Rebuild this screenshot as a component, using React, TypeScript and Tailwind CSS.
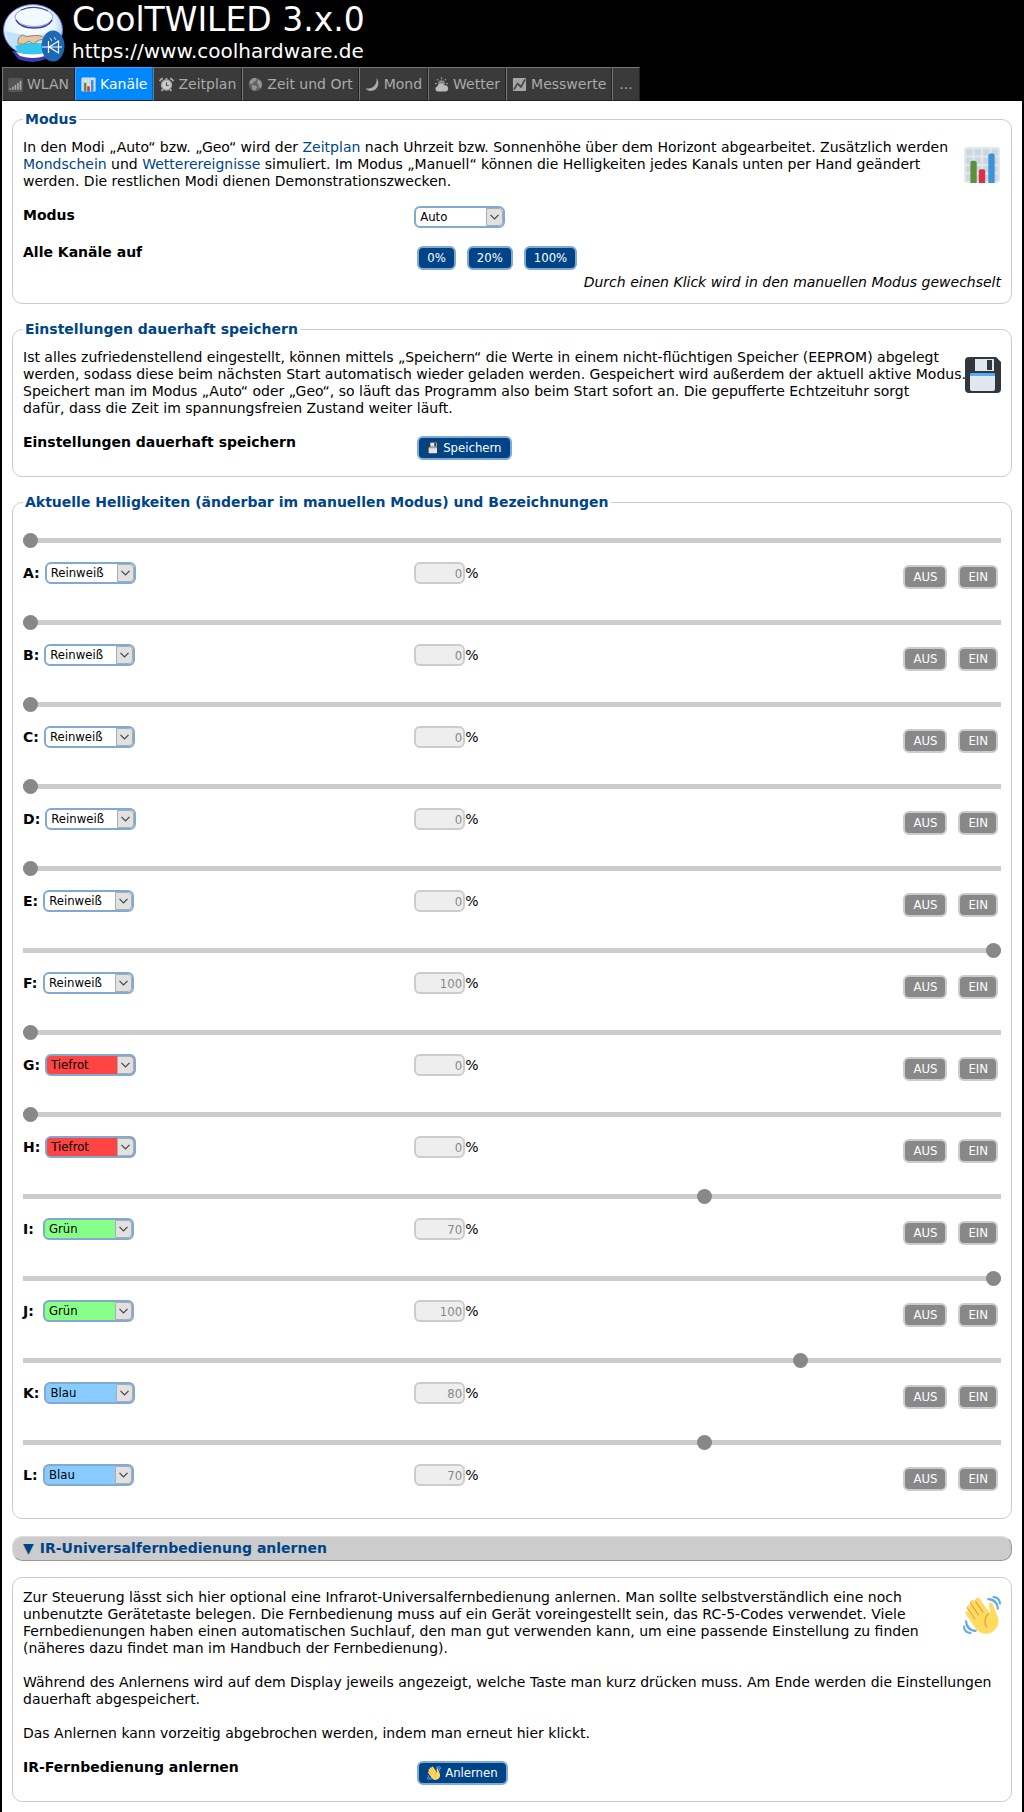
import React, { useState } from 'react';

interface IconProps {
  className?: string;
}

interface Channel {
  name: string;
  color: string;
  value: number;
}

const COLORS = ['Reinweiß', 'Tiefrot', 'Grün', 'Blau'];

const COLOR_CLASSES: Record<string, string> = {
  Reinweiß: 'bg-white',
  Tiefrot: 'bg-[#ff4444]',
  Grün: 'bg-[#88ff88]',
  Blau: 'bg-[#88ccff]',
};

const CHANNELS: Channel[] = [
  { name: 'A', color: 'Reinweiß', value: 0 },
  { name: 'B', color: 'Reinweiß', value: 0 },
  { name: 'C', color: 'Reinweiß', value: 0 },
  { name: 'D', color: 'Reinweiß', value: 0 },
  { name: 'E', color: 'Reinweiß', value: 0 },
  { name: 'F', color: 'Reinweiß', value: 100 },
  { name: 'G', color: 'Tiefrot', value: 0 },
  { name: 'H', color: 'Tiefrot', value: 0 },
  { name: 'I', color: 'Grün', value: 70 },
  { name: 'J', color: 'Grün', value: 100 },
  { name: 'K', color: 'Blau', value: 80 },
  { name: 'L', color: 'Blau', value: 70 },
];

const smallFont = "font-['DejaVu_Sans_Condensed','DejaVu_Sans',sans-serif]";

// Icons

const ChartIcon: React.FC<IconProps> = ({ className }) => (
  <svg viewBox="0 0 36 36" className={className} aria-hidden="true">
    <rect x="1" y="1" width="34" height="34" rx="3" fill="#e1e8ed" />
    <g fill="#ccd6dd">
      {[3, 11, 19, 27].map((y) =>
        [3, 11, 19, 27].map((x) => <rect key={`${x}-${y}`} x={x} y={y} width="6" height="6" rx="1" />)
      )}
    </g>
    <path fill="#5c913b" d="M13 35H7V16a2 2 0 0 1 2-2h2a2 2 0 0 1 2 2v19z" />
    <path fill="#dd2e44" d="M21 35h-6V24a2 2 0 0 1 2-2h2a2 2 0 0 1 2 2v11z" />
    <path fill="#3b94d9" d="M30 35h-6V9a2 2 0 0 1 2-2h2a2 2 0 0 1 2 2v26z" />
  </svg>
);

const FloppyIcon: React.FC<IconProps> = ({ className }) => (
  <svg viewBox="0 0 36 36" className={className} aria-hidden="true">
    <path fill="#31373d" d="M4 0h27l5 5v27a4 4 0 0 1-4 4H4a4 4 0 0 1-4-4V4a4 4 0 0 1 4-4z" />
    <path fill="#e1e8ed" d="M10 2h19v12H10z" />
    <path fill="#31373d" d="M22 3h5v10h-5z" />
    <rect x="5" y="16" width="25" height="18" rx="2" fill="#e1e8ed" />
    <path fill="#55acee" d="M5 19v-1a2 2 0 0 1 2-2h21a2 2 0 0 1 2 2v1z" />
  </svg>
);

const WaveIcon: React.FC<IconProps> = ({ className }) => (
  <svg viewBox="0 0 36 36" className={className} aria-hidden="true">
    <path fill="#ef9645" d="M4.861 9.147c.94-.657 2.357-.531 3.201.166l-.968-1.407c-.779-1.111-.5-2.313.612-3.093 1.112-.777 4.263 1.312 4.263 1.312-.786-1.122-.639-2.544.483-3.331 1.122-.784 2.67-.513 3.456.611l10.42 14.72L25 31l-11.083-4.042L4.25 12.625c-.793-1.129-.519-2.686.611-3.478z" />
    <path fill="#ffdc5d" d="M2.695 17.336s-1.132-1.65.519-2.781c1.649-1.131 2.78.518 2.78.518l5.251 7.658c.181-.302.379-.6.6-.894L4.557 11.21s-1.131-1.649.519-2.78c1.649-1.131 2.78.518 2.78.518l6.855 9.997c.255-.208.516-.417.785-.622L7.549 6.732s-1.131-1.649.519-2.78c1.649-1.131 2.78.518 2.78.518l7.947 11.589c.292-.179.581-.334.871-.498L12.238 4.729s-1.131-1.649.518-2.78c1.649-1.131 2.78.518 2.78.518l7.854 11.453 1.194 1.742c-4.948 3.394-5.419 9.779-2.592 13.902.565.825 1.39.26 1.39.26-3.393-4.949-2.357-10.51 2.592-13.903L24.515 8.62s-.545-1.924 1.378-2.47c1.924-.545 2.47 1.379 2.47 1.379l1.685 5.004c.668 1.984 1.379 3.961 2.32 5.831 2.657 5.28 1.07 11.842-3.94 15.279-5.465 3.747-12.936 2.354-16.684-3.11L2.695 17.336z" />
    <g fill="#5dadec">
      <path d="M12 32.042C8 32.042 3.958 28 3.958 24c0-.553-.405-1-.958-1s-1.042.447-1.042 1C1.958 30 6 34.042 12 34.042c.553 0 1-.489 1-1.042s-.447-.958-1-.958z" />
      <path d="M7 34c-3 0-5-2-5-5 0-.553-.447-1-1-1s-1 .447-1 1c0 4 3 7 7 7 .553 0 1-.447 1-1s-.447-1-1-1zM24 2c-.552 0-1 .448-1 1s.448 1 1 1c4 0 8 3.589 8 8 0 .552.448 1 1 1s1-.448 1-1c0-5.514-4-10-10-10z" />
      <path d="M29 .042c-.552 0-1 .406-1 .958s.448 1.042 1 1.042c3 0 4.958 2.225 4.958 4.958 0 .552.489 1 1.042 1s.958-.448.958-1C35.958 3.163 33 .042 29 .042z" />
    </g>
  </svg>
);

const SignalIcon: React.FC<IconProps> = ({ className }) => (
  <svg viewBox="0 0 16 16" className={className} aria-hidden="true">
    <rect x="0" y="1" width="16" height="15" rx="2" fill="#555" />
    <path stroke="#aaa" strokeWidth="1.700" d="M2.500 13.500v-1.500M5.200 13.500v-3M7.900 13.500v-5M10.600 13.500v-7M13.300 13.500v-9.500" />
  </svg>
);

const ClockIcon: React.FC<IconProps> = ({ className }) => (
  <svg viewBox="0 0 16 16" className={className} aria-hidden="true">
    <g fill="none" stroke="#aaa">
      <path strokeWidth="2" d="M.8 4.500A4 4 0 0 1 4.200 1.600M15.200 4.500a4 4 0 0 0-3.400-2.900M4 13l-1.200 2M12 13l1.200 2" />
      <circle cx="8" cy="8.500" r="5.300" fill="#ccc" strokeWidth="1.500" />
    </g>
    <path fill="#aaa" d="M7 1h2v2H7z" />
    <path fill="none" stroke="#555" strokeWidth="1.200" d="M8 5.500v3.500h2.500" />
  </svg>
);

const GlobeIcon: React.FC<IconProps> = ({ className }) => (
  <svg viewBox="0 0 16 16" className={className} aria-hidden="true">
    <circle cx="8" cy="8" r="7.300" fill="#606060" />
    <path fill="#949494" d="M2 4 5 1.300 8 1l1.500 1.500L8 4.500 6 5 5 7.500 3 7 1.500 8zM4 8.500l4 .5 2 2-2 2.500-1 1.500-2.500-2zM10.500 3l3 1 1.500 4-1.500 4-2-1-.5-3-1.500-2z" />
  </svg>
);

const MoonIcon: React.FC<IconProps> = ({ className }) => (
  <svg viewBox="0 0 16 16" className={className} aria-hidden="true">
    <path fill="#aaa" d="M12.500 1C16 6 14 12.500 9 14.300 5.500 15.500 2 14.500.5 12 8 13.500 13 8.500 12.500 1z" />
  </svg>
);

const WeatherIcon: React.FC<IconProps> = ({ className }) => (
  <svg viewBox="0 0 16 16" className={className} aria-hidden="true">
    <circle cx="8" cy="7" r="3.600" fill="#888" />
    <path stroke="#999" strokeWidth="1.200" d="M8 .3v2M3.200 2.200l1.300 1.300M12.800 2.200l-1.300 1.300M1 7h2M13 7h2" />
    <path fill="#bbb" d="M3.500 15.500A3 3 0 0 1 3.600 9.800 4 4 0 0 1 11 9a3.300 3.300 0 0 1 1.500 6.500z" />
  </svg>
);

const GraphIcon: React.FC<IconProps> = ({ className }) => (
  <svg viewBox="0 0 16 16" className={className} aria-hidden="true">
    <rect x="1" y="1" width="14" height="14" rx="1" fill="#aaa" />
    <path stroke="#999" strokeWidth=".6" d="M1 4.500h14M1 8h14M1 11.500h14M4.500 1v14M8 1v14M11.500 1v14" />
    <path fill="none" stroke="#444" strokeWidth="1.700" d="m2 13.500 4-6.500 3.500 3.500L14 2.500" />
  </svg>
);

// Fish bowl with the diode badge
const Logo: React.FC<IconProps> = ({ className }) => (
  <svg viewBox="0 0 64 64" className={className} aria-hidden="true">
    <defs>
      <radialGradient id="glass" cx=".45" cy=".4" r=".6">
        <stop offset="0" stopColor="#fff" />
        <stop offset=".7" stopColor="#e6f3ff" />
        <stop offset="1" stopColor="#9cc9f6" />
      </radialGradient>
    </defs>
    <path fill="#3c3cae" d="M10 48h40l-6 8q-14 6-28 0z" />
    <ellipse cx="31" cy="27" rx="29.500" ry="25.500" fill="url(#glass)" stroke="#6a78d6" />
    <path fill="#bfe3fb" d="M4 28q24 8 54 0-2 12-10 17-17-5-34 0Q6 40 4 28z" />
    <path fill="#35c8ef" d="M13 43q18-7 35 0l-3 6q-14 5-29 0z" />
    <path fill="#fff" d="M14 49q17 5 32 0l-3 4q-12 4-25 0z" />
    <path fill="#e2c9a4" stroke="#a08064" d="M16 41q-1-8 5-9 3 3 8 1 10-2 14 3l-6 1-6 4-4-3-5 3z" />
    <ellipse cx="32" cy="14" rx="19" ry="9.500" fill="#f3faff" stroke="#8f9fe0" />
    <path fill="none" stroke="#3b3d9c" strokeWidth="1.500" d="M14 17q4 8 18 8t18-8" />
    <path fill="none" stroke="#3b3d9c" d="M19 7q13-6 27 1" />
    <ellipse cx="51" cy="43" rx="11.500" ry="15.500" fill="#1d68b4" />
    <g fill="none" stroke="#fff" strokeWidth="1.200">
      <path d="M40 44h20M46.500 38v12M56.500 38v12l-9.500-6z" />
      <path strokeWidth=".8" d="m50 38-2-3M54 37l-2-3" />
    </g>
  </svg>
);

const TABS = [
  { label: 'WLAN', icon: SignalIcon },
  { label: 'Kanäle', icon: ChartIcon },
  { label: 'Zeitplan', icon: ClockIcon },
  { label: 'Zeit und Ort', icon: GlobeIcon },
  { label: 'Mond', icon: MoonIcon },
  { label: 'Wetter', icon: WeatherIcon },
  { label: 'Messwerte', icon: GraphIcon },
];

// Form controls

interface SelectProps {
  id: string;
  value: string;
  options: string[];
  className?: string;
  onChange: (value: string) => void;
}

const Select: React.FC<SelectProps> = ({ id, value, options, className = 'bg-white', onChange }) => (
  <span className="relative inline-block h-[22px] w-[91px]">
    <select
      id={id}
      value={value}
      onChange={(e) => onChange(e.target.value)}
      className={`block h-[22px] w-full appearance-none rounded-md border-2 border-[#82a9d1] pl-1 pr-5 text-[13px] leading-4 text-black ${smallFont} ${className}`}
    >
      {options.map((option) => (
        <option key={option}>{option}</option>
      ))}
    </select>
    <span className="pointer-events-none absolute inset-y-0.5 right-0.5 flex w-[17px] items-center justify-center rounded-r-sm border border-[#adadad] bg-[#e1e1e1]">
      <svg viewBox="0 0 9 6" className="h-1.5 w-[9px]" aria-hidden="true">
        <path fill="none" stroke="#444" strokeWidth="1.200" d="M.5.800 4.500 4.800 8.500.800" />
      </svg>
    </span>
  </span>
);

interface ButtonProps {
  gray?: boolean;
  onClick?: () => void;
  children: React.ReactNode;
}

const Button: React.FC<ButtonProps> = ({ gray, onClick, children }) => (
  <button
    type="button"
    onClick={onClick}
    className={`flex h-6 items-center gap-1 rounded-md border-2 px-2 text-[13px] leading-4 text-white ${smallFont} ${
      gray ? 'border-[#cccccc] bg-[#888888]' : 'border-[#82a9d1] bg-[#004488]'
    }`}
  >
    {children}
  </button>
);

const Legend: React.FC<{ children: React.ReactNode }> = ({ children }) => (
  <legend className="px-0.5 font-bold text-[#004488]">{children}</legend>
);

const fieldsetClass = 'min-w-0 rounded-[10px] border border-[#cccccc] px-2.5 pt-[11px] pb-3';

const App: React.FC = () => {
  const [mode, setMode] = useState('Auto');
  const [channels, setChannels] = useState<Channel[]>(CHANNELS);

  const updateChannel = (name: string, change: Partial<Channel>) => {
    setChannels(channels.map((c) => (c.name === name ? { ...c, ...change } : c)));
  };

  // Any direct change of brightness leaves the automatic modes
  const setAll = (value: number) => {
    setMode('Manuell');
    setChannels(channels.map((c) => ({ ...c, value })));
  };

  return (
    <div className="min-h-screen bg-black px-0.5 font-['DejaVu_Sans',sans-serif] text-[14px] leading-[17px] text-black">
      <header className="flex h-[67px] items-start gap-1.5 pt-px text-white">
        <Logo className="mt-0.5 h-16 w-16 shrink-0" />
        <div>
          <h1 className="text-[33px] leading-[38px]">CoolTWILED 3.x.0</h1>
          <a href="https://www.coolhardware.de" className="block text-[20px] leading-6">https://www.coolhardware.de</a>
        </div>
      </header>

      <nav className="flex h-[34px] text-[#aaaaaa]">
        {TABS.map(({ label, icon: Icon }) => (
          <a
            key={label}
            href="#"
            className={`flex items-center gap-1 border border-b-[#222222] px-[5px] ${
              label === 'Kanäle'
                ? 'border-t-[#44a4ff] border-r-[#0066bb] border-l-[#44a4ff] bg-[#0088ff] text-white'
                : 'border-t-[#777777] border-r-[#222222] border-l-[#777777] bg-[#3a3a3a]'
            }`}
          >
            <Icon className="h-[15px] w-[15px]" />
            {label}
          </a>
        ))}
        <a href="#" className="flex items-center border border-t-[#777777] border-r-[#222222] border-b-[#222222] border-l-[#777777] bg-[#3a3a3a] px-[6px]">
          ...
        </a>
      </nav>

      <main className="bg-white p-2.5">
        <fieldset className={fieldsetClass}>
          <Legend>Modus</Legend>
          <div className="float-right flex h-[51px] w-8 items-center justify-end">
            <ChartIcon className="h-[38px] w-[38px] shrink-0" />
          </div>
          <p className="mb-4">
            In den Modi „Auto“ bzw. „Geo“ wird der <a href="#" className="text-[#004488]">Zeitplan</a> nach Uhrzeit bzw.
            Sonnenhöhe über dem Horizont abgearbeitet. Zusätzlich werden{' '}
            <a href="#" className="text-[#004488]">Mondschein</a> und{' '}
            <a href="#" className="text-[#004488]">Wetterereignisse</a> simuliert. Im Modus „Manuell“ können die
            Helligkeiten jedes Kanals unten per Hand geändert
            <br />
            werden. Die restlichen Modi dienen Demonstrationszwecken.
          </p>
          <div className="grid grid-cols-[40%_1fr] items-start pb-[15px]">
            <label htmlFor="mode" className="pt-px font-bold">Modus</label>
            <Select id="mode" value={mode} options={['Auto', 'Geo', 'Manuell', 'Demo']} onChange={setMode} />
          </div>
          <div className="grid grid-cols-[40%_1fr] items-start pb-1">
            <span className="pt-px font-bold">Alle Kanäle auf</span>
            <div className="flex gap-[11px] pt-[3px] pl-[3px]">
              <Button onClick={() => setAll(0)}>0%</Button>
              <Button onClick={() => setAll(20)}>20%</Button>
              <Button onClick={() => setAll(100)}>100%</Button>
            </div>
          </div>
          <p className="text-right italic">Durch einen Klick wird in den manuellen Modus gewechselt</p>
        </fieldset>

        <fieldset className={`mt-[17px] ${fieldsetClass}`}>
          <Legend>Einstellungen dauerhaft speichern</Legend>
          <div className="float-right flex h-[51px] w-8 items-center justify-end">
            <FloppyIcon className="h-9 w-9 shrink-0" />
          </div>
          <p className="mb-4">
            Ist alles zufriedenstellend eingestellt, können mittels „Speichern“ die Werte in einem nicht-flüchtigen
            Speicher (EEPROM) abgelegt werden, sodass diese beim nächsten Start automatisch wieder geladen werden.
            Gespeichert wird außerdem der aktuell aktive Modus. Speichert man im Modus „Auto“ oder „Geo“, so läuft das
            Programm also beim Start sofort an. Die gepufferte Echtzeituhr sorgt
            <br />
            dafür, dass die Zeit im spannungsfreien Zustand weiter läuft.
          </p>
          <div className="grid grid-cols-[40%_1fr] items-start pb-1">
            <span className="pt-px font-bold">Einstellungen dauerhaft speichern</span>
            <div className="flex pt-[3px] pl-[3px]">
              <Button>
                <FloppyIcon className="h-3 w-3" />
                Speichern
              </Button>
            </div>
          </div>
        </fieldset>

        <fieldset className={`mt-[17px] ${fieldsetClass}`}>
          <Legend>Aktuelle Helligkeiten (änderbar im manuellen Modus) und Bezeichnungen</Legend>
          {channels.map(({ name, color, value }) => (
            <div key={name} className="h-[82px] pt-[11px]">
              <input
                type="range"
                min={0}
                max={100}
                value={value}
                disabled={mode !== 'Manuell'}
                aria-label={`Helligkeit ${name}`}
                onChange={(e) => updateChannel(name, { value: Number(e.target.value) })}
                className="block h-[15px] w-full appearance-none bg-transparent [&::-webkit-slider-runnable-track]:h-[5px] [&::-webkit-slider-runnable-track]:bg-[#cccccc] [&::-webkit-slider-thumb]:-mt-[5px] [&::-webkit-slider-thumb]:h-[15px] [&::-webkit-slider-thumb]:w-[15px] [&::-webkit-slider-thumb]:appearance-none [&::-webkit-slider-thumb]:rounded-full [&::-webkit-slider-thumb]:bg-[#888888]"
              />
              <div className="grid grid-cols-[40%_1fr_auto] items-start pt-3.5">
                <div className="flex items-center gap-[5px]">
                  <label htmlFor={`color-${name}`} className="min-w-[15px] font-bold">{name}:</label>
                  <Select
                    id={`color-${name}`}
                    value={color}
                    options={COLORS}
                    className={COLOR_CLASSES[color]}
                    onChange={(next) => updateChannel(name, { color: next })}
                  />
                </div>
                <label className="flex items-center">
                  <input
                    type="text"
                    value={value}
                    disabled={mode !== 'Manuell'}
                    aria-label={`Wert ${name}`}
                    onChange={(e) => updateChannel(name, { value: Number(e.target.value) || 0 })}
                    className={`h-[22px] w-[51px] rounded-md border-2 border-[#cccccc] bg-[#eeeeee] px-px text-right text-[13px] leading-4 text-[#888888] ${smallFont}`}
                  />
                  %
                </label>
                <div className="flex gap-[11px] pt-[3px] pr-[3px]">
                  <Button gray onClick={() => updateChannel(name, { value: 0 })}>AUS</Button>
                  <Button gray onClick={() => updateChannel(name, { value: 100 })}>EIN</Button>
                </div>
              </div>
            </div>
          ))}
        </fieldset>

        <button
          type="button"
          className="mt-[17px] mb-4 flex h-[25px] w-full items-center gap-1.5 rounded-[10px] border border-t-[#dddddd] border-r-[#999999] border-b-[#999999] border-l-[#dddddd] bg-[#cccccc] px-2.5 text-left font-bold text-[#004488]"
        >
          <span>▼</span>
          IR-Universalfernbedienung anlernen
        </button>

        <fieldset className={fieldsetClass}>
          <div className="float-right flex h-[51px] w-9 items-center justify-end">
            <WaveIcon className="h-[38px] w-[38px] shrink-0" />
          </div>
          <p className="mb-[17px]">
            Zur Steuerung lässt sich hier optional eine Infrarot-Universalfernbedienung anlernen. Man sollte
            selbstverständlich eine noch unbenutzte Gerätetaste belegen. Die Fernbedienung muss auf ein Gerät
            voreingestellt sein, das RC-5-Codes verwendet. Viele Fernbedienungen haben einen automatischen Suchlauf,
            den man gut verwenden kann, um eine passende Einstellung zu finden (näheres dazu findet man im Handbuch
            der Fernbedienung).
          </p>
          <p className="mb-[17px]">
            Während des Anlernens wird auf dem Display jeweils angezeigt, welche Taste man kurz drücken muss. Am Ende
            werden die Einstellungen dauerhaft abgespeichert.
          </p>
          <p className="mb-4">Das Anlernen kann vorzeitig abgebrochen werden, indem man erneut hier klickt.</p>
          <div className="grid grid-cols-[40%_1fr] items-start pb-1">
            <span className="pt-px font-bold">IR-Fernbedienung anlernen</span>
            <div className="flex pt-[3px] pl-[3px]">
              <Button>
                <WaveIcon className="h-3.5 w-3.5" />
                Anlernen
              </Button>
            </div>
          </div>
        </fieldset>
      </main>
    </div>
  );
};

export default App;
